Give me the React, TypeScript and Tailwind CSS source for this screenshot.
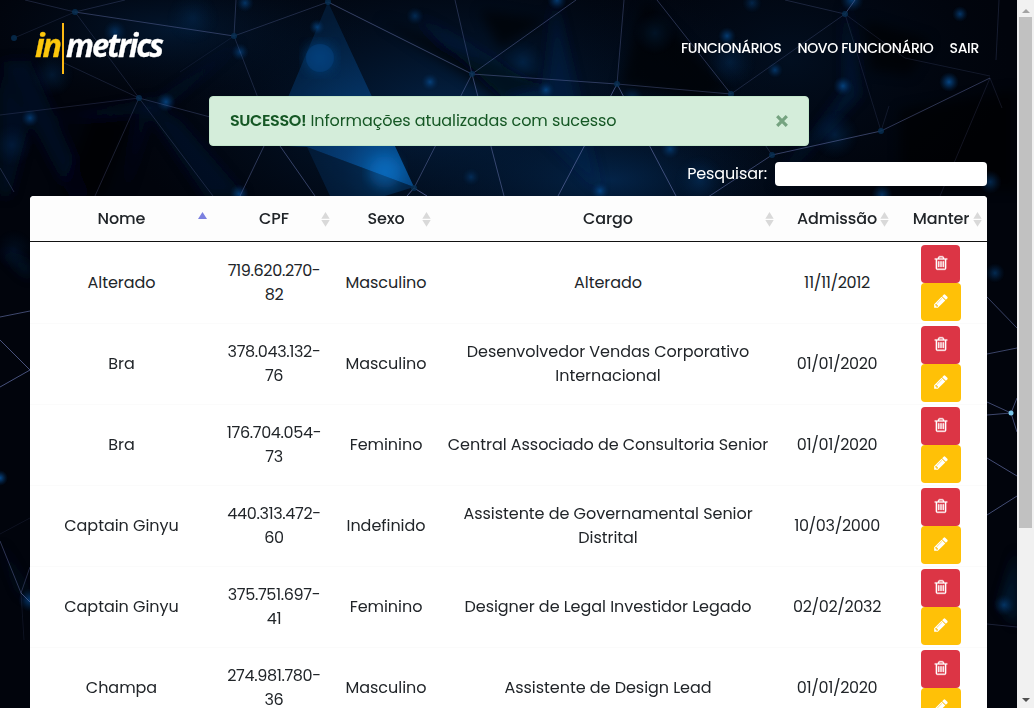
import React from "react";

type Employee = {
  name: string;
  cpf: string[];
  gender: string;
  role: string[];
  date: string;
};

const employees: Employee[] = [
  { name: "Alterado", cpf: ["719.620.270-", "82"], gender: "Masculino", role: ["Alterado"], date: "11/11/2012" },
  { name: "Bra", cpf: ["378.043.132-", "76"], gender: "Masculino", role: ["Desenvolvedor Vendas Corporativo", "Internacional"], date: "01/01/2020" },
  { name: "Bra", cpf: ["176.704.054-", "73"], gender: "Feminino", role: ["Central Associado de Consultoria Senior"], date: "01/01/2020" },
  { name: "Captain Ginyu", cpf: ["440.313.472-", "60"], gender: "Indefinido", role: ["Assistente de Governamental Senior", "Distrital"], date: "10/03/2000" },
  { name: "Captain Ginyu", cpf: ["375.751.697-", "41"], gender: "Feminino", role: ["Designer de Legal Investidor Legado"], date: "02/02/2032" },
  { name: "Champa", cpf: ["274.981.780-", "36"], gender: "Masculino", role: ["Assistente de Design Lead"], date: "01/01/2020" },
];

const columns = ["Nome", "CPF", "Sexo", "Cargo", "Admissão", "Manter"];

const mesh: [number, number, number, number, number][] = [
  [75, 12, 25, 0, 0.3], [75, 12, 125, 0, 0.3], [75, 12, 234, 36, 0.5], [234, 36, 328, 2, 0.35],
  [75, 12, 139, 98, 0.25], [75, 12, 14, 38, 0.2], [139, 98, 62, 62, 0.25], [139, 98, 0, 115, 0.25],
  [139, 98, 95, 196, 0.3], [139, 98, 240, 125, 0.35], [139, 98, 213, 196, 0.3], [180, 72, 234, 36, 0.15],
  [234, 36, 258, 98, 0.3], [236, 0, 234, 36, 0.4], [328, 2, 472, 74, 0.6], [472, 74, 455, 0, 0.4],
  [472, 74, 576, 0, 0.5], [472, 74, 617, 84, 0.5], [472, 74, 414, 188, 0.55], [472, 74, 504, 196, 0.6],
  [617, 84, 624, 0, 0.4], [617, 84, 731, 94, 0.4], [617, 84, 558, 196, 0.7], [617, 84, 676, 196, 0.7],
  [657, 0, 731, 94, 0.45], [731, 94, 845, 14, 0.3], [845, 14, 785, 0, 0.3], [845, 14, 855, 0, 0.6],
  [845, 14, 881, 131, 0.2], [881, 131, 990, 78, 0.5], [881, 131, 772, 155, 0.6], [772, 155, 708, 197, 0.6],
  [755, 130, 772, 155, 0.3], [845, 14, 905, 58, 0.2], [905, 58, 990, 76, 0.2], [990, 78, 940, 196, 0.2],
  [990, 78, 1002, 108, 0.2], [999, 0, 996, 60, 0.25], [264, 146, 240, 196, 0.5], [280, 146, 315, 196, 0.6],
  [414, 188, 407, 196, 0.8], [414, 188, 427, 196, 0.8], [0, 168, 14, 192, 0.35], [881, 131, 889, 106, 0.2],
  [0, 317, 30, 311, 0.7], [0, 340, 30, 370, 0.8], [30, 370, 0, 387, 0.8], [0, 541, 21, 593, 0.5],
  [21, 593, 30, 567, 0.4], [21, 593, 30, 602, 0.7], [21, 593, 24, 640, 0.15], [0, 534, 30, 518, 0.15],
  [987, 354, 1017, 348, 0.65], [1011, 413, 987, 402, 0.7], [1011, 413, 987, 415, 0.7],
  [1011, 413, 1017, 398, 0.7], [1011, 413, 1017, 432, 0.7], [987, 458, 1017, 476, 0.75],
  [987, 515, 1017, 496, 0.75], [987, 297, 1017, 328, 0.65], [987, 624, 1017, 627, 0.3],
];

const glows: [number, number, number, number][] = [
  [30, 118, 9, 0.65], [12, 145, 22, 0.2], [166, 102, 10, 0.75], [52, 75, 22, 0.25], [240, 52, 9, 0.6],
  [115, 32, 12, 0.5], [245, 3, 9, 0.6], [317, 27, 8, 0.7], [239, 194, 10, 0.7], [193, 18, 26, 0.2], [415, 16, 9, 0.45],
  [430, 82, 9, 0.7], [546, 90, 9, 0.7], [557, 0, 10, 0.7], [523, 62, 22, 0.25], [632, 98, 12, 0.4],
  [600, 191, 10, 0.75], [471, 177, 9, 0.4], [670, 149, 10, 0.6], [727, 36, 9, 0.7], [775, 70, 8, 0.6],
  [843, 86, 10, 0.75], [949, 82, 10, 0.85], [960, 14, 8, 0.65], [852, 0, 12, 0.7], [655, 33, 22, 0.2],
  [990, 182, 12, 0.5], [882, 195, 11, 0.6], [835, 135, 24, 0.3], [730, 62, 26, 0.25], [995, 273, 10, 0.5],
  [1004, 605, 11, 0.55], [0, 478, 8, 0.9], [30, 600, 12, 0.7], [14, 250, 20, 0.15], [700, 180, 25, 0.3], [752, 3, 10, 0.4],
];

const nodes: [number, number][] = [
  [75, 12], [234, 36], [139, 98], [472, 74], [617, 84], [731, 94], [845, 14], [881, 131], [772, 155], [414, 188], [328, 2], [14, 38],
];

function Backdrop() {
  return (
    <svg className="absolute inset-0" width="1017" height="708" viewBox="0 0 1017 708" aria-hidden="true">
      <defs>
        <radialGradient id="glow">
          <stop offset="0" stopColor="#07529a" />
          <stop offset="0.4" stopColor="#053a70" stopOpacity="0.75" />
          <stop offset="1" stopColor="#032448" stopOpacity="0" />
        </radialGradient>
        <radialGradient id="haze">
          <stop offset="0" stopColor="#042c58" stopOpacity="0.75" />
          <stop offset="1" stopColor="#021024" stopOpacity="0" />
        </radialGradient>
        <radialGradient id="shard" gradientUnits="userSpaceOnUse" cx="385" cy="172" r="165">
          <stop offset="0" stopColor="#0873cb" />
          <stop offset="0.25" stopColor="#07488a" />
          <stop offset="1" stopColor="#042a52" stopOpacity="0.6" />
        </radialGradient>
        <filter id="soft" x="-20%" y="-20%" width="140%" height="140%">
          <feGaussianBlur stdDeviation="6" />
        </filter>
      </defs>
      <rect width="1017" height="708" fill="#01040c" />
      <ellipse cx="450" cy="110" rx="330" ry="170" fill="url(#haze)" />
      <ellipse cx="610" cy="180" rx="240" ry="90" fill="url(#haze)" />
      <ellipse cx="170" cy="30" rx="200" ry="75" fill="url(#haze)" opacity="0.6" />
      <ellipse cx="790" cy="60" rx="220" ry="150" fill="url(#haze)" opacity="0.35" />
      <g filter="url(#soft)">
        <path d="M0 62 L30 60 L90 196 L70 196Z M139 98 L180 120 L245 196 L205 196Z M125 196 L140 110 L150 110Z M0 70 L30 120 L10 196 L0 196Z" fill="#021c3c" opacity="0.4" />
        <path d="M245 40 L160 100 L45 120 L160 108Z M417 16 L545 90 L555 0 L600 190Z M845 0 L845 90 L770 190 L860 95Z" fill="#032b57" opacity="0.4" />
        <path d="M380 20 L450 45 L550 85 L500 100Z M645 0 L730 90 L700 100 L620 85Z M480 10 L545 20 L500 50Z" fill="#00030a" opacity="0.6" />
        <path d="M90 115 L130 120 L105 196 L60 196Z M865 20 L930 40 L910 75 L870 70Z M900 110 L1017 90 L1017 190 L900 190Z" fill="#000208" opacity="0.6" />
        <path d="M0 250 L30 266 L30 278Z M0 541 L20 590 L30 600Z M1017 550 L1000 605 L1017 625Z" fill="#06325f" opacity="0.45" />
      </g>
      <path d="M328 2 L414 187 L307 147 L268 145Z" fill="url(#shard)" opacity="0.8" />
      <path d="M307 147 L414 187 L385 196 L330 196Z" fill="url(#shard)" opacity="0.3" />
      <circle cx="385" cy="172" r="16" fill="#0873cb" opacity="0.45" filter="url(#soft)" />
      <circle cx="320" cy="58" r="15" fill="#063c76" opacity="0.9" filter="url(#soft)" />
      <circle cx="320" cy="58" r="14" fill="#06427f" opacity="0.5" />
      {glows.map(([x, y, r, o], i) => (
        <circle key={i} cx={x} cy={y} r={r} fill="url(#glow)" opacity={o} />
      ))}
      {mesh.map(([x1, y1, x2, y2, o], i) => (
        <line key={i} x1={x1} y1={y1} x2={x2} y2={y2} stroke="#6470a8" strokeWidth="0.9" opacity={o} />
      ))}
      {nodes.map(([x, y], i) => (
        <circle key={i} cx={x} cy={y} r="3" fill="#073053" opacity="0.8" />
      ))}
      <circle cx="1011" cy="413" r="2.5" fill="#79c7ec" />
    </svg>
  );
}

function Logo() {
  return (
    <svg className="overflow-visible" width="150" height="54" viewBox="0 0 150 54" role="img" aria-label="inmetrics">
      <g fontFamily="Noto Sans, Open Sans" fontWeight="700" fontStyle="italic" fontSize="31.5" letterSpacing="-2" strokeWidth="0.3">
        <text x="1" y="36" fill="#fdc70c" stroke="#fdc70c" textLength="25" lengthAdjust="spacingAndGlyphs">in</text>
        <text x="32" y="36" fill="#fff" stroke="#fff" textLength="96" lengthAdjust="spacingAndGlyphs">metrics</text>
      </g>
      <rect x="28" y="2" width="2" height="51" fill="#fdb913" />
    </svg>
  );
}

function TrashIcon() {
  return (
    <svg className="-mt-0.5" width="16" height="16" viewBox="0 0 1792 1792" fill="#fff" stroke="#fff" strokeWidth="40">
      <path d="M704 736v576q0 14-9 23t-23 9h-64q-14 0-23-9t-9-23v-576q0-14 9-23t23-9h64q14 0 23 9t9 23zm256 0v576q0 14-9 23t-23 9h-64q-14 0-23-9t-9-23v-576q0-14 9-23t23-9h64q14 0 23 9t9 23zm256 0v576q0 14-9 23t-23 9h-64q-14 0-23-9t-9-23v-576q0-14 9-23t23-9h64q14 0 23 9t9 23zm128 724v-948h-896v948q0 22 7 40.5t14.5 27 10.5 8.5h832q3 0 10.5-8.5t14.5-27 7-40.5zm-672-1076h448l-48-117q-7-9-17-11h-317q-10 2-17 11zm928 32v64q0 14-9 23t-23 9h-96v948q0 83-47 143.5t-113 60.5h-832q-66 0-113-58.5t-47-141.5v-952h-96q-14 0-23-9t-9-23v-64q0-14 9-23t23-9h309l70-167q15-37 54-63t79-26h320q40 0 79 26t54 63l70 167h309q14 0 23 9t9 23z" />
    </svg>
  );
}

function PencilIcon() {
  return (
    <svg className="-mt-0.5" width="16" height="16" viewBox="0 0 1792 1792" fill="#fff">
      <path d="M491 1536l91-91-235-235-91 91v107h128v128h107zm523-928q0-22-22-22-10 0-17 7l-542 542q-7 7-7 17 0 22 22 22 10 0 17-7l542-542q7-7 7-17zm-54-192l416 416-832 832h-416v-416zm683 96q0 53-37 90l-166 166-416-416 166-165q36-38 90-38 53 0 91 38l235 234q37 39 37 91z" />
    </svg>
  );
}

function SortMark({ active }: { active: boolean }) {
  return (
    <svg className="absolute right-1 top-[15px]" width="11" height="17" viewBox="0 0 11 17">
      {active ? (
        <path d="M5.5 1 L10 8 H1Z" fill="#7b80e0" />
      ) : (
        <path d="M5.5 1 L9.7 7.7 H1.3Z M1.3 9 H9.7 L5.5 15.7Z" fill="#d9d9d9" />
      )}
    </svg>
  );
}

function Lines({ items }: { items: string[] }) {
  return (
    <div className="flex flex-col items-center pl-px">
      {items.map((text) => (
        <span key={text} className="whitespace-nowrap">{text}</span>
      ))}
    </div>
  );
}

const grid = "grid grid-cols-[182px_123px_101px_343px_115px_93px]";

export default function App() {
  return (
    <div className="flex h-[708px] w-[1034px] overflow-hidden font-['Poppins','Inter',sans-serif] text-base leading-6 tracking-[-0.04px] text-[#212529]">
      <div className="relative h-full w-[1017px] shrink-0 overflow-hidden">
        <Backdrop />
        <div className="relative flex flex-col">
          <header className="flex h-24 items-center justify-between pl-[34px] pr-[38px]">
            <Logo />
            <nav className="flex gap-4 text-[14px] font-medium tracking-[-0.32px] text-white">
              <a className="whitespace-nowrap">FUNCIONÁRIOS</a>
              <a className="whitespace-nowrap">NOVO FUNCIONÁRIO</a>
              <a className="whitespace-nowrap">SAIR</a>
            </nav>
          </header>
          <div className="ml-[209px] flex h-[50px] w-[600px] items-center justify-between rounded border border-[#c3e6cb] bg-[#d4edda] pl-5 pr-5 text-[#155724]">
            <p className="whitespace-nowrap tracking-[-0.09px]"><strong className="font-semibold tracking-[-0.4px]">SUCESSO!</strong> Informações atualizadas com sucesso</p>
            <svg width="12" height="12" viewBox="0 0 12 12" className="text-[#75a380]">
              <path d="M1.2 1.2 L10.8 10.8 M10.8 1.2 L1.2 10.8" stroke="currentColor" strokeWidth="3.2" />
            </svg>
          </div>
          <label className="mr-[30px] flex h-[50px] items-center justify-end gap-2 pt-1.5 text-white">
            <span className="tracking-[-0.12px]">Pesquisar:</span>
            <input className="h-6 w-[212px] rounded bg-white px-2 text-[#212529] outline-none" />
          </label>
          <div className="ml-[30px] w-[957px] rounded-t-sm bg-white">
            <div className={grid + " h-[46px] rounded-t-sm border-b border-[#111] bg-[#fdfdfd]"}>
              {columns.map((label, i) => (
                <div key={label} className="relative flex items-center justify-center pl-px font-medium tracking-[-0.12px]">
                  <span>{label}</span>
                  <SortMark active={i === 0} />
                </div>
              ))}
            </div>
            {employees.map((e, i) => (
              <div key={i} className={grid + " h-[81px] items-center " + (i ? "border-t border-[#fbfbfb]" : "")}>
                <Lines items={[e.name]} />
                <div className="tracking-[-0.35px]"><Lines items={e.cpf} /></div>
                <Lines items={[e.gender]} />
                <Lines items={e.role} />
                <div className="tracking-[-0.35px]"><Lines items={[e.date]} /></div>
                <div className="flex flex-col items-start pl-[27px]">
                  <button className="flex h-[38px] w-[39px] items-center justify-center rounded bg-[#dc3545]"><TrashIcon /></button>
                  <button className="flex h-[38px] w-10 items-center justify-center rounded bg-[#ffc107]"><PencilIcon /></button>
                </div>
              </div>
            ))}
          </div>
        </div>
      </div>
      <div className="flex h-full w-[17px] shrink-0 flex-col items-center bg-[#f1f1f1]">
        <div className="flex h-[17px] shrink-0 items-center justify-center">
          <svg width="8" height="4" viewBox="0 0 8 4" className="mt-1"><path d="M4 0 L8 4 H0Z" fill="#a3a3a3" /></svg>
        </div>
        <div className="h-[511px] w-[13px] bg-[#c1c1c1]" />
        <div className="mt-auto flex h-[17px] items-center justify-center">
          <svg width="8" height="4" viewBox="0 0 8 4"><path d="M0 0 H8 L4 4Z" fill="#505050" /></svg>
        </div>
      </div>
    </div>
  );
}
